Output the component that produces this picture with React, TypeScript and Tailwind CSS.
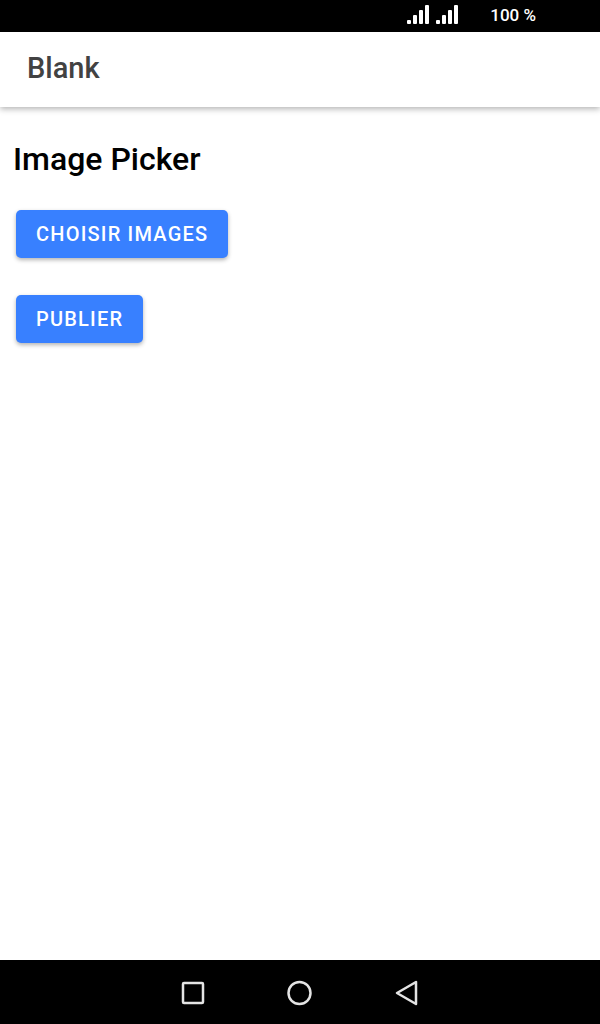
function SignalIcon() {
  return (
    <svg width="22" height="20" viewBox="0 0 22 20" fill="#fff" aria-hidden="true">
      <rect x="0" y="15" width="4" height="4" rx="1" />
      <rect x="6" y="10" width="4" height="9" rx="1" />
      <rect x="12" y="5" width="4" height="14" rx="1" />
      <rect x="18" y="0" width="4" height="19" rx="1" />
    </svg>
  );
}

const buttonClass =
  "h-12 rounded-[5px] bg-[#3880ff] px-5 text-xl font-medium uppercase tracking-[0.06em] text-white shadow-[0_2px_4px_rgba(0,0,0,0.3)]";

export default function App() {
  return (
    <div className="flex min-h-screen flex-col bg-white font-[Roboto,sans-serif] text-black">
      <div className="flex h-8 items-center justify-end bg-black pr-16 text-white">
        <div className="flex gap-[7px] pb-0.5">
          <SignalIcon />
          <SignalIcon />
        </div>
        <span className="ml-8 text-[17px] font-medium">100 %</span>
      </div>
      <header className="flex h-[75px] items-center px-[27px] pb-0.5 shadow-[0_2px_6px_rgba(0,0,0,0.3)]">
        <h1 className="text-[29px] font-medium text-[#424242]">Blank</h1>
      </header>
      <main className="flex flex-1 flex-col items-start px-4 pt-8">
        <h2 className="-ml-[3px] text-[32px] leading-10 font-medium">Image Picker</h2>
        <button type="button" className={`mt-[31px] ${buttonClass}`}>Choisir images</button>
        <button type="button" className={`mt-[37px] ${buttonClass}`}>Publier</button>
      </main>
      <nav className="flex h-16 items-center justify-center gap-[79px] bg-black pt-px">
        <button type="button" aria-label="Recent apps">
          <svg width="28" height="28" viewBox="0 0 28 28" fill="none" stroke="#e4e4e4" strokeWidth="2.5">
            <rect x="4" y="4" width="20" height="20" rx="1" />
          </svg>
        </button>
        <button type="button" aria-label="Home">
          <svg width="28" height="28" viewBox="0 0 28 28" fill="none" stroke="#e4e4e4" strokeWidth="2.5">
            <circle cx="13.5" cy="14" r="11" />
          </svg>
        </button>
        <button type="button" aria-label="Back">
          <svg width="28" height="28" viewBox="0 0 28 28" fill="none" stroke="#e4e4e4" strokeWidth="2.5" strokeLinejoin="round">
            <path d="M23 3v22L4 14Z" />
          </svg>
        </button>
      </nav>
    </div>
  );
}
